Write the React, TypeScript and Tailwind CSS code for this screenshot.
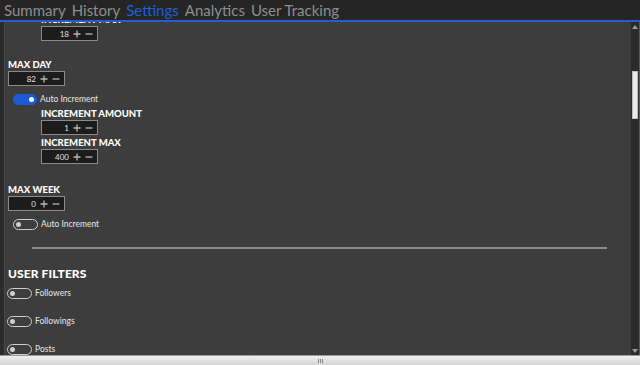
import React from 'react';

const tabs = ['Summary', 'History', 'Settings', 'Analytics', 'User Tracking'];

function NumberBox({ value }: { value: number }) {
  return (
    <div className="flex h-[15px] w-[57px] items-center border border-[#8a8a8a] bg-[#1c1c1c]">
      <span className="w-[27px] text-right text-[8px] leading-none text-[#e0e0e0]">{value}</span>
      <svg className="ml-[4px]" width="8" height="8" viewBox="0 0 8 8">
        <path d="M4 0.5V7.5M0.5 4H7.5" stroke="#b8b8b8" strokeWidth="1.3" />
      </svg>
      <svg className="ml-[4px]" width="8" height="8" viewBox="0 0 8 8">
        <path d="M0.5 4H7.5" stroke="#b8b8b8" strokeWidth="1.3" />
      </svg>
    </div>
  );
}

function Toggle({ on, label }: { on?: boolean; label: string }) {
  return (
    <div className="flex h-[14px] items-center gap-[3px]">
      {on ? (
        <div className="flex h-[11px] w-[24px] items-center justify-end rounded-full bg-[#1a5ad6] pr-[3px]">
          <div className="h-[5px] w-[5px] rounded-full bg-white" />
        </div>
      ) : (
        <div className="flex h-[11px] w-[25px] items-center rounded-full border-[1.5px] border-[#cfcfcf] pl-[2px]">
          <div className="h-[5px] w-[5px] rounded-full bg-[#cfcfcf]" />
        </div>
      )}
      <span className="text-[8.5px] leading-none text-[#e6e6e6]">{label}</span>
    </div>
  );
}

function Label({ children, className = '' }: { children: React.ReactNode; className?: string }) {
  return (
    <div className={`h-[12px] text-[9.5px] font-black leading-[12px] text-white ${className}`}>
      {children}
    </div>
  );
}

export default function App() {
  return (
    <div
      className="flex h-[365px] w-[640px] flex-col overflow-hidden bg-[#3d3d3d]"
      style={{ fontFamily: 'Lato, "Open Sans", sans-serif' }}
    >
      {/* tab header */}
      <div className="flex h-[20px] shrink-0 items-center gap-[6px] bg-[#252525] pl-[4px]">
        {tabs.map((t) => (
          <span
            key={t}
            className={`text-[15px] leading-[18px] ${t === 'Settings' ? 'text-[#1f5fd6]' : 'text-[#8e8e8e]'}`}
          >
            {t}
          </span>
        ))}
      </div>
      <div className="h-[2px] shrink-0 bg-[#1f5fd6]" />

      <div className="flex min-h-0 flex-1">
        <div className="w-[5px] shrink-0 border-r border-[#484848] bg-[#2b2b2b]" />

        {/* scrolled settings content */}
        <div className="min-w-0 flex-1 overflow-hidden pl-[3px]">
          <div className="pl-[33px]">
            <Label className="-mt-[8px]">INCREMENT MAX</Label>
            <NumberBox value={18} />
          </div>

          <Label className="mt-[18px]">MAX DAY</Label>
          <NumberBox value={82} />
          <div className="mt-[6px] pl-[5px]">
            <Toggle on label="Auto Increment" />
          </div>
          <div className="pl-[33px]">
            <Label className="mt-[2px]">INCREMENT AMOUNT</Label>
            <NumberBox value={1} />
            <Label className="mt-[2px]">INCREMENT MAX</Label>
            <NumberBox value={400} />
          </div>

          <Label className="mt-[20px]">MAX WEEK</Label>
          <NumberBox value={0} />
          <div className="mt-[6px] pl-[5px]">
            <Toggle label="Auto Increment" />
          </div>

          <div className="ml-[24px] mr-[24px] mt-[16px] h-[2px] bg-[#8c8c8c]" />

          <div className="mt-[18px] h-[14px] text-[12px] font-black leading-[14px] tracking-[0.1px] text-white">
            USER FILTERS
          </div>
          <div className="-ml-[1px] mt-[5px] flex flex-col gap-[14px]">
            <Toggle label="Followers" />
            <Toggle label="Followings" />
            <Toggle label="Posts" />
          </div>
        </div>

        {/* vertical scrollbar */}
        <div className="relative flex w-[8px] shrink-0 flex-col items-center bg-[#2a2a2a]">
          <svg className="mt-[3px]" width="6" height="4" viewBox="0 0 6 4">
            <path d="M0 4L3 0L6 4Z" fill="#9a9a9a" />
          </svg>
          <div className="mt-[42px] h-[48px] w-[6px] border border-[#bdbdbd] bg-[#ebe7eb]" />
          <div className="flex-1" />
          <svg className="mb-[2px]" width="6" height="4" viewBox="0 0 6 4">
            <path d="M0 0L6 0L3 4Z" fill="#9a9a9a" />
          </svg>
        </div>
        <div className="w-[1px] shrink-0 bg-[#1f5fd6]" />
      </div>

      {/* bottom resize bar */}
      <div className="flex h-[10px] shrink-0 items-center justify-center border-t border-[#9a9a9a] bg-gradient-to-b from-[#f0f0f0] to-[#d4d4d4]">
        <div className="flex gap-[1px]">
          <div className="h-[4px] w-[1px] bg-[#888]" />
          <div className="h-[4px] w-[1px] bg-[#888]" />
          <div className="h-[4px] w-[1px] bg-[#888]" />
        </div>
      </div>
    </div>
  );
}
